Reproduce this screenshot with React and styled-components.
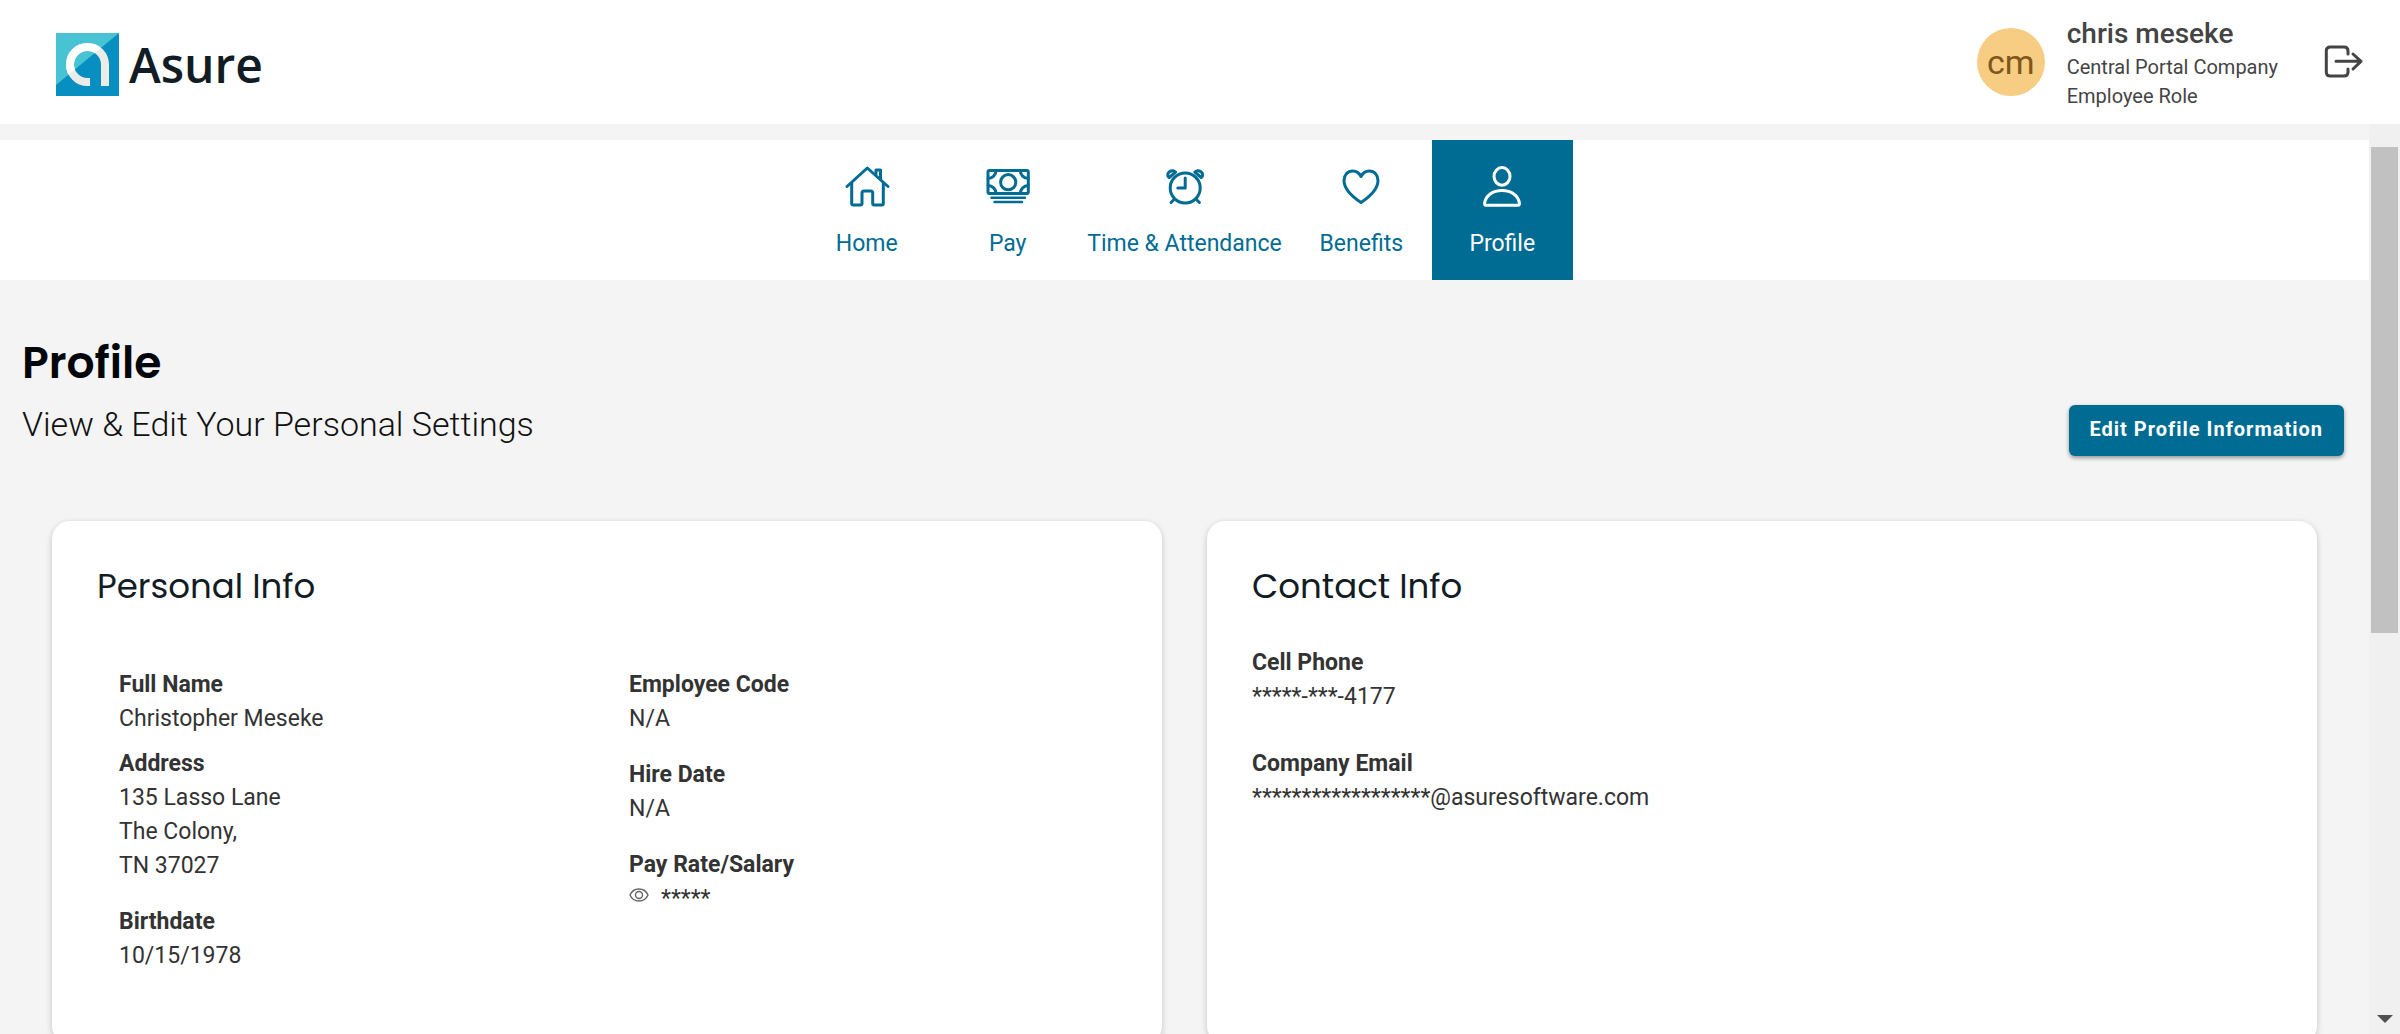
import React, {Component} from 'react';
import styled, {createGlobalStyle} from 'styled-components';

const GlobalStyle = createGlobalStyle`
    * {
        box-sizing: border-box;
    }

    body {
        margin: 0;
        font-family: Roboto, "Liberation Sans", sans-serif;
        font-size: 23px;
        line-height: 34px;
        color: #333;
        background-color: #f4f4f4;
    }
`;

const Page = styled.div`
    display: flex;
    flex-direction: column;
    height: 100vh;
    overflow: hidden;
`;

const Header = styled.header`
    display: flex;
    flex-shrink: 0;
    align-items: center;
    justify-content: space-between;
    height: 124px;
    padding: 0 36px 0 56px;
    background-color: #fff;
`;

const Brand = styled.a`
    display: flex;
    align-items: center;
    gap: 10px;
    padding-top: 5px;
    color: #111c24;
    font-family: "Open Sans", sans-serif;
    font-size: 48px;
    font-weight: 600;
    line-height: 63px;
    text-decoration: none;
`;

const Account = styled.div`
    display: flex;
    align-items: center;
    gap: 22px;
`;

const Avatar = styled.div`
    display: flex;
    align-items: center;
    justify-content: center;
    width: 68px;
    height: 68px;
    border-radius: 50%;
    background-color: #f7cd83;
    color: #80571a;
    font-size: 34px;
`;

const AccountText = styled.div`
    padding-top: 4px;
    color: #444;
    font-size: 20px;
    line-height: 29px;
`;

const UserName = styled.div`
    margin-bottom: 2px;
    font-size: 28px;
    font-weight: 500;
    line-height: 34px;
`;

const LogoutButton = styled.button`
    display: flex;
    margin-left: 24px;
    padding: 0;
    border: 0;
    background: none;
    color: #444;
    cursor: pointer;
`;

const Body = styled.div`
    display: flex;
    flex: 1;
    min-height: 0;
`;

const Content = styled.div`
    flex: 1;
    min-width: 0;
    padding-top: 16px;
    overflow: hidden;
`;

const Nav = styled.nav`
    display: flex;
    justify-content: center;
    background-color: #fff;
`;

const NavItem = styled.a`
    display: flex;
    flex-direction: column;
    align-items: center;
    gap: 17px;
    min-width: 141px;
    height: 140px;
    padding: 22px 9px 0;
    background-color: ${props => (props.$active ? '#006c94' : 'transparent')};
    color: ${props => (props.$active ? '#fff' : '#006c94')};
    text-decoration: none;
`;

const Icon = styled.svg`
    display: block;
    fill: none;
    stroke: currentColor;
    stroke-width: ${props => props.$stroke || 3};
    stroke-linecap: round;
    stroke-linejoin: round;
`;

const PageHead = styled.div`
    display: flex;
    align-items: flex-end;
    justify-content: space-between;
    padding: 52px 25px 0 22px;
`;

const Title = styled.h1`
    margin: 0;
    color: #03070c;
    font-family: Poppins, Inter, sans-serif;
    font-size: 44px;
    font-weight: 600;
    line-height: 62px;
`;

const Subtitle = styled.p`
    margin: 0;
    padding: 8px 0 10px;
    color: #111;
    font-size: 34px;
    font-weight: 300;
    line-height: 44px;
`;

const EditButton = styled.button`
    height: 51px;
    padding: 0 21px 3px;
    border: 0;
    border-radius: 6px;
    background-color: #006c94;
    box-shadow: 0 2px 4px rgba(0, 0, 0, 0.4);
    color: #fff;
    font-family: inherit;
    font-size: 20px;
    font-weight: 700;
    letter-spacing: 1px;
    cursor: pointer;
`;

const Cards = styled.main`
    display: grid;
    grid-template-columns: 1fr 1fr;
    gap: 45px;
    padding: 65px 52px;
`;

const Card = styled.section`
    min-height: 523px;
    padding: 45px;
    border-radius: 18px;
    background-color: #fff;
    box-shadow: 0 2px 6px rgba(0, 0, 0, 0.2);
`;

const CardTitle = styled.h2`
    margin: 0 0 40px;
    color: #111c24;
    font-family: Poppins, Inter, sans-serif;
    font-size: 34px;
    font-weight: 400;
    line-height: 40px;
`;

const Columns = styled.div`
    display: grid;
    grid-template-columns: 1fr 1fr;
`;

const Fields = styled.dl`
    display: flex;
    flex-direction: column;
    gap: ${props => props.$gap || 22}px;
    margin: 0;
    padding: ${props => (props.$inset ? '22px' : '0')};
`;

const FieldGroup = styled.div`
    display: flex;
    flex-direction: column;
    gap: 11px;
`;

const Label = styled.dt`
    font-weight: 700;
`;

const Value = styled.dd`
    display: flex;
    align-items: center;
    gap: 12px;
    margin: 0;
`;

const RevealButton = styled.button`
    display: flex;
    padding: 0 0 8px;
    border: 0;
    background: none;
    color: #666;
    cursor: pointer;
`;

const ScrollTrack = styled.div`
    display: flex;
    flex-direction: column;
    justify-content: space-between;
    width: 31px;
    padding: 23px 2px 11px;
    background-color: #f0f0f0;
`;

const ScrollThumb = styled.div`
    height: 55.5%;
    background-color: #c1c1c1;
`;

const ScrollArrow = styled.div`
    align-self: center;
    border-top: 8px solid #505050;
    border-right: 8px solid transparent;
    border-left: 8px solid transparent;
`;

const Logo = () => (
    <svg width="63" height="63" viewBox="0 0 63 63" aria-hidden="true">
        <defs>
            <clipPath id="logo-light">
                <path d="M0 0H63L0 52Z" />
            </clipPath>
        </defs>
        <path d="M0 0H63V63H0Z" fill="#068fc0" />
        <path d="M0 0H63L0 52Z" fill="#48c3d4" />
        <g fill="none" strokeWidth="8">
            <path d="M34 49H31.5A17.5 17.5 0 1 1 49 31.5V53" stroke="#ebebe8" />
            <path d="M34 49H31.5A17.5 17.5 0 1 1 49 31.5V53" stroke="#fff" clipPath="url(#logo-light)" />
        </g>
    </svg>
);

const icons = {
    home: (
        <>
            <path d="M4 24.5L24.3 6L45 24.5" />
            <path d="M33 12V8H37.5V17" />
            <path d="M8.7 21V41.5Q8.7 43 10.2 43H17.5Q19 43 19 41.5V31Q19 29 21 29H27.7Q29.7 29 29.7 31V41.5Q29.7 43 31.2 43H38.8Q40.3 43 40.3 41.5V21" />
        </>
    ),
    pay: (
        <>
            <rect x="4" y="8.5" width="40.3" height="23" rx="1.5" />
            <circle cx="24.2" cy="20.2" r="7.6" />
            <path d="M12 8.5A8 8 0 0 1 4 16.5M36.3 8.5A8 8 0 0 0 44.3 16.5M4 23.5A8 8 0 0 1 12 31.5M44.3 23.5A8 8 0 0 0 36.3 31.5" />
            <path d="M7.5 35.8H41M10.5 40H38" strokeWidth="2.5" />
        </>
    ),
    time: (
        <>
            <circle cx="24.2" cy="26" r="15" />
            <path d="M24.2 16V26H16.8M13.5 37L10 40.5M34.9 37L38.4 40.5" />
            <path d="M8.2 15.5C5.8 13.5 6.6 11.3 8.5 9.8C10.8 8 13.2 8.4 14.6 10.2ZM40.2 15.5C42.6 13.5 41.8 11.3 39.9 9.8C37.6 8 35.2 8.4 33.8 10.2Z" />
        </>
    ),
    benefits: (
        <path d="M24 14.5C22 10.5 19 9 15.8 9C10.5 9 7 13 7 18.5C7 27 15 34.5 24 40.5C33 34.5 41 27 41 18.5C41 13 37.5 9 32.2 9C29 9 26 10.5 24 14.5Z" />
    ),
    profile: (
        <>
            <ellipse cx="24" cy="14.4" rx="8" ry="8.8" />
            <path d="M8 43.2Q6.3 43.2 6.6 41C7.8 33.5 14.5 28.5 24 28.5S40.2 33.5 41.4 41Q41.7 43.2 40 43.2Z" />
        </>
    ),
};

const navItems = [
    {id: 'home', label: 'Home'},
    {id: 'pay', label: 'Pay'},
    {id: 'time', label: 'Time & Attendance'},
    {id: 'benefits', label: 'Benefits'},
    {id: 'profile', label: 'Profile'},
];

const Field = ({label, children}) => (
    <div>
        <Label>{label}</Label>
        {children}
    </div>
);

class App extends Component {
    render() {
        return (
            <Page>
                <GlobalStyle />
                <Header>
                    <Brand href="#home">
                        <Logo />
                        Asure
                    </Brand>
                    <Account>
                        <Avatar>cm</Avatar>
                        <AccountText>
                            <UserName>chris meseke</UserName>
                            <div>Central Portal Company</div>
                            <div>Employee Role</div>
                        </AccountText>
                        <LogoutButton type="button" aria-label="Log out">
                            <Icon width="40" height="34" viewBox="0 0 40 34">
                                <path d="M24 9V6Q24 2 20 2H6.3Q2.3 2 2.3 6V27Q2.3 31 6.3 31H20Q24 31 24 27V24" />
                                <path d="M12 16.3H37M29 9L37 16.3L29 24" />
                            </Icon>
                        </LogoutButton>
                    </Account>
                </Header>
                <Body>
                    <Content>
                        <Nav>
                            {navItems.map(item => (
                                <NavItem key={item.id} href={`#${item.id}`} $active={item.id === 'profile'}>
                                    <Icon width="48" height="48" viewBox="0 0 48 48">
                                        {icons[item.id]}
                                    </Icon>
                                    {item.label}
                                </NavItem>
                            ))}
                        </Nav>
                        <PageHead>
                            <div>
                                <Title>Profile</Title>
                                <Subtitle>View &amp; Edit Your Personal Settings</Subtitle>
                            </div>
                            <EditButton type="button">Edit Profile Information</EditButton>
                        </PageHead>
                        <Cards>
                            <Card>
                                <CardTitle>Personal Info</CardTitle>
                                <Columns>
                                    <Fields $inset>
                                        <FieldGroup>
                                            <Field label="Full Name">
                                                <Value>Christopher Meseke</Value>
                                            </Field>
                                            <Field label="Address">
                                                <Value>135 Lasso Lane</Value>
                                                <Value>The Colony,</Value>
                                                <Value>TN 37027</Value>
                                            </Field>
                                        </FieldGroup>
                                        <Field label="Birthdate">
                                            <Value>10/15/1978</Value>
                                        </Field>
                                    </Fields>
                                    <Fields $inset>
                                        <Field label="Employee Code">
                                            <Value>N/A</Value>
                                        </Field>
                                        <Field label="Hire Date">
                                            <Value>N/A</Value>
                                        </Field>
                                        <Field label="Pay Rate/Salary">
                                            <Value>
                                                <RevealButton type="button" aria-label="Show pay rate">
                                                    <Icon width="20" height="16" viewBox="0 0 20 16" $stroke={1.4}>
                                                        <path d="M1 8C4.5 0 15.5 0 19 8C15.5 16 4.5 16 1 8Z" />
                                                        <circle cx="10" cy="8" r="3.5" />
                                                    </Icon>
                                                </RevealButton>
                                                *****
                                            </Value>
                                        </Field>
                                    </Fields>
                                </Columns>
                            </Card>
                            <Card>
                                <CardTitle>Contact Info</CardTitle>
                                <Fields $gap={33}>
                                    <Field label="Cell Phone">
                                        <Value>*****-***-4177</Value>
                                    </Field>
                                    <Field label="Company Email">
                                        <Value>******************@asuresoftware.com</Value>
                                    </Field>
                                </Fields>
                            </Card>
                        </Cards>
                    </Content>
                    <ScrollTrack>
                        <ScrollThumb />
                        <ScrollArrow />
                    </ScrollTrack>
                </Body>
            </Page>
        );
    }
}

export default App;
